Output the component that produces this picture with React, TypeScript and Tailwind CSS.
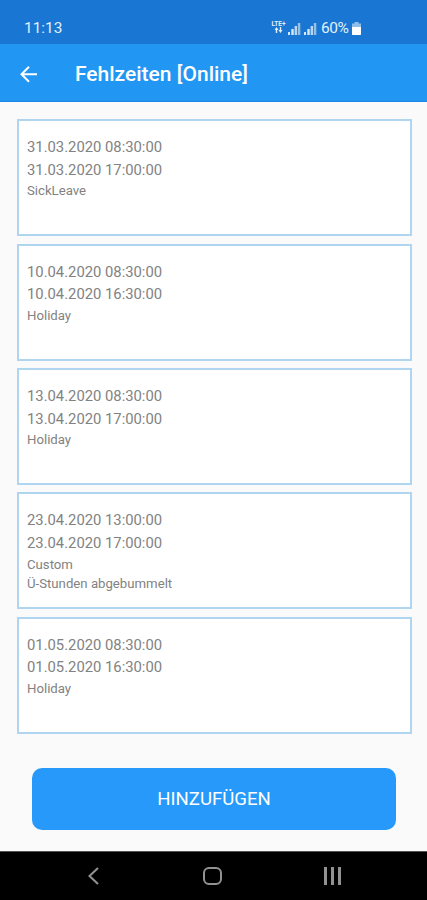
import React from 'react';

interface Absence {
  from: string;
  to: string;
  type: string;
  note?: string;
}

const absences: Absence[] = [
  { from: '31.03.2020 08:30:00', to: '31.03.2020 17:00:00', type: 'SickLeave' },
  { from: '10.04.2020 08:30:00', to: '10.04.2020 16:30:00', type: 'Holiday' },
  { from: '13.04.2020 08:30:00', to: '13.04.2020 17:00:00', type: 'Holiday' },
  { from: '23.04.2020 13:00:00', to: '23.04.2020 17:00:00', type: 'Custom', note: 'Ü-Stunden abgebummelt' },
  { from: '01.05.2020 08:30:00', to: '01.05.2020 16:30:00', type: 'Holiday' },
];

const SignalIcon: React.FC = () => (
  <svg className="h-[13px] w-[13px]" viewBox="0 0 13 13" fill="#d7e8f8">
    <rect x="0" y="10" width="2" height="3" />
    <rect x="3.3" y="7" width="2.4" height="6" />
    <rect x="6.6" y="4" width="2.4" height="9" opacity="0.85" />
    <rect x="9.8" y="1" width="2.5" height="12" opacity="0.65" />
  </svg>
);

const StatusBar: React.FC = () => (
  <div className="flex h-11 items-end bg-[#1976d2] pr-[66px] pb-[7px] pl-6 text-[#e3effb]">
    <span className="flex-1 text-[15.4px] leading-[18px]">11:13</span>
    <div className="flex h-[18px] items-center">
      <div className="mr-[2px] mb-[2px] flex w-[15px] flex-col items-center">
        <span className="text-[6.5px] leading-[6px] font-bold">LTE+</span>
        <svg className="h-[6px] w-[9px]" viewBox="0 0 9 6" fill="currentColor">
          <path d="M2.5 0 4.5 3H3.2V6H1.8V3H.5zM6.5 6l2-3H7.2V0H5.8v3H4.5z" />
        </svg>
      </div>
      <SignalIcon />
      <div className="ml-[3px]">
        <SignalIcon />
      </div>
      <span className="ml-[4px] w-[31px] text-[15.5px] leading-[18px] tracking-[-0.5px] whitespace-nowrap">60%</span>
      <svg className="h-[13px] w-[9px]" viewBox="0 0 9 13">
        <path d="M2.5 0h4v1.5H9V13H0V1.5h2.5z" fill="#8fbfea" />
        <path d="M0 5h9v7a1 1 0 0 1-1 1H1a1 1 0 0 1-1-1z" fill="#fff" />
      </svg>
    </div>
  </div>
);

const AppBar: React.FC = () => (
  <header className="flex h-[58px] items-center border-b border-[#1c87e5] bg-[#2196f3] pt-[3px] pl-5 text-white">
    <button aria-label="Zurück" className="mr-[38px]">
      <svg className="block h-[17px] w-[17px]" viewBox="0 0 17 17" fill="none" stroke="currentColor" strokeWidth="2">
        <path d="M17 8.2H2M9 .7 1.5 8.2 9 15.7" />
      </svg>
    </button>
    <h1 className="pt-[2px] text-[21px] font-medium whitespace-nowrap">Fehlzeiten [Online]</h1>
  </header>
);

const AbsenceCard: React.FC<Absence> = ({ from, to, type, note }) => (
  <li className="h-[117px] border-2 border-[#b0d5f0] bg-white pt-[15px] pl-2 text-[#828282]">
    <p className="text-[14.8px] leading-[22.6px]">{from}</p>
    <p className="text-[14.8px] leading-[22.6px]">{to}</p>
    <p className="text-[13.2px] leading-[19.2px]">{type}</p>
    {note && <p className="text-[13.2px] leading-[19.2px]">{note}</p>}
  </li>
);

const NavigationBar: React.FC = () => (
  <nav className="flex h-[49px] items-center justify-between border-t border-[#555] bg-black pr-[85px] pl-[88px] text-[#929292]">
    <svg className="h-[18px] w-[11px]" viewBox="0 0 11 18" fill="none" stroke="currentColor" strokeWidth="2">
      <path d="M10 1 1.5 9l8.5 8" />
    </svg>
    <svg className="ml-[2px] h-[18px] w-[19px]" viewBox="0 0 19 18" fill="none" stroke="currentColor" strokeWidth="2">
      <rect x="1" y="1" width="17" height="16" rx="5" />
    </svg>
    <svg className="h-[18px] w-[18px]" viewBox="0 0 18 18" fill="currentColor">
      <path d="M0 0h3v18H0zM7 0h3v18H7zM14 0h3v18h-3z" />
    </svg>
  </nav>
);

export default function App() {
  return (
    <div className="flex h-[900px] w-[427px] flex-col overflow-hidden bg-[#fafafa] font-['Roboto',sans-serif]">
      <StatusBar />
      <AppBar />
      <main className="flex flex-1 flex-col">
        <ul className="flex flex-col gap-[7.4px] pt-[17.3px] pr-[15px] pl-[17px]">
          {absences.map((absence) => (
            <AbsenceCard key={absence.from} {...absence} />
          ))}
        </ul>
        <button className="mt-[34px] mr-[31px] ml-8 h-[62px] rounded-[10px] bg-[#2699fb] pt-[3px] text-[18.6px] text-white">
          HINZUFÜGEN
        </button>
      </main>
      <NavigationBar />
    </div>
  );
}
